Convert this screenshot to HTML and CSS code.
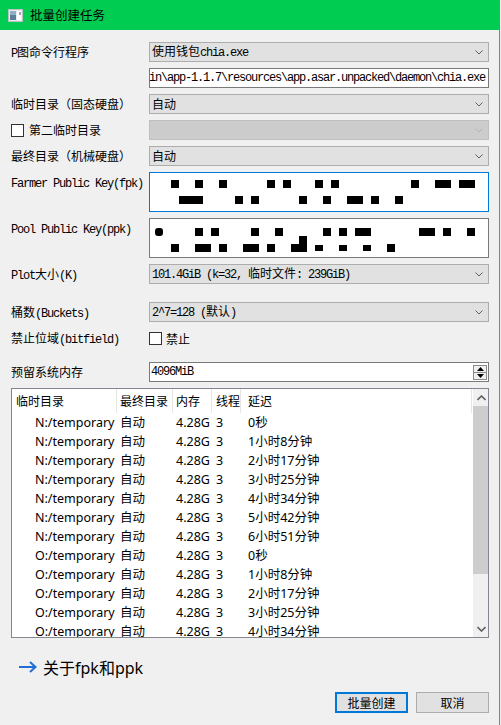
FILE: index.html
```html
<!DOCTYPE html>
<html lang="zh-CN">
<head>
<meta charset="utf-8">
<title>批量创建任务</title>
<link rel="stylesheet" href="styles.css">
</head>
<body>
<div class="window">
  <div class="titlebar">
    <svg class="app-icon" width="15" height="13" viewBox="0 0 15 13">
      <rect x="0.5" y="0.5" width="14" height="12" fill="#e8ecef" stroke="#b9c0c6"/>
      <rect x="2" y="2" width="6" height="9" fill="#5d7f96"/>
      <rect x="2" y="2" width="6" height="4" fill="#8fb0c4"/>
      <rect x="9" y="2" width="4" height="9" fill="#ffffff"/>
      <rect x="11" y="3" width="2" height="3" fill="#9aa5ad"/>
    </svg>
    <span class="title">批量创建任务</span>
  </div>

  <div class="content">
    <div class="form">
      <div class="row">
        <div class="label"><span class="m">P</span>图命令行程序</div>
        <div class="combo"><span class="val">使用钱包<span class="m">chia.exe</span></span><svg class="chev" width="8" height="5" viewBox="0 0 8 5"><path d="M0.5 0.5 L4 4 L7.5 0.5" fill="none" stroke="#606060" stroke-width="1"/></svg></div>
      </div>
      <div class="row">
        <div class="label"></div>
        <div class="input path"><span class="m">C:\Users\Administrator\AppData\Local\chia-blockchain\app-1.1.7\resources\app.asar.unpacked\daemon\chia.exe</span></div>
      </div>
      <div class="row">
        <div class="label">临时目录（固态硬盘）</div>
        <div class="combo"><span class="val">自动</span><svg class="chev" width="8" height="5" viewBox="0 0 8 5"><path d="M0.5 0.5 L4 4 L7.5 0.5" fill="none" stroke="#606060" stroke-width="1"/></svg></div>
      </div>
      <div class="row">
        <div class="label check-label"><span class="checkbox"></span>第二临时目录</div>
        <div class="combo disabled"><span class="val"></span><svg class="chev" width="8" height="5" viewBox="0 0 8 5"><path d="M0.5 0.5 L4 4 L7.5 0.5" fill="none" stroke="#b4b4b4" stroke-width="1"/></svg></div>
      </div>
      <div class="row">
        <div class="label">最终目录（机械硬盘）</div>
        <div class="combo"><span class="val">自动</span><svg class="chev" width="8" height="5" viewBox="0 0 8 5"><path d="M0.5 0.5 L4 4 L7.5 0.5" fill="none" stroke="#606060" stroke-width="1"/></svg></div>
      </div>
      <div class="row tall">
        <div class="label"><span class="m">Farmer Public Key(fpk)</span></div>
        <div class="keybox focused">
          <span class="redact" style="left:21px;top:7px;width:8px"></span>
          <span class="redact" style="left:45px;top:7px;width:8px"></span>
          <span class="redact" style="left:69px;top:7px;width:8px"></span>
          <span class="redact" style="left:117px;top:7px;width:8px"></span>
          <span class="redact" style="left:133px;top:7px;width:8px"></span>
          <span class="redact" style="left:165px;top:7px;width:8px"></span>
          <span class="redact" style="left:181px;top:7px;width:8px"></span>
          <span class="redact" style="left:261px;top:7px;width:8px"></span>
          <span class="redact" style="left:285px;top:7px;width:16px"></span>
          <span class="redact" style="left:309px;top:7px;width:16px"></span>
          <span class="redact" style="left:29px;top:23px;width:24px"></span>
          <span class="redact" style="left:85px;top:23px;width:8px"></span>
          <span class="redact" style="left:101px;top:23px;width:8px"></span>
          <span class="redact" style="left:149px;top:23px;width:8px"></span>
          <span class="redact" style="left:173px;top:23px;width:8px"></span>
          <span class="redact" style="left:197px;top:23px;width:16px"></span>
          <span class="redact" style="left:221px;top:23px;width:8px"></span>
          <span class="redact" style="left:245px;top:23px;width:8px"></span>
        </div>
      </div>
      <div class="row tall">
        <div class="label"><span class="m">Pool Public Key(ppk)</span></div>
        <div class="keybox">
          <span class="redact round" style="left:5px;top:9px;width:8px"></span>
          <span class="redact" style="left:45px;top:9px;width:8px"></span>
          <span class="redact" style="left:61px;top:9px;width:8px"></span>
          <span class="redact" style="left:101px;top:9px;width:8px"></span>
          <span class="redact" style="left:125px;top:9px;width:8px"></span>
          <span class="redact" style="left:173px;top:9px;width:8px"></span>
          <span class="redact" style="left:189px;top:9px;width:8px"></span>
          <span class="redact" style="left:205px;top:9px;width:16px"></span>
          <span class="redact" style="left:269px;top:9px;width:16px"></span>
          <span class="redact" style="left:293px;top:9px;width:8px"></span>
          <span class="redact" style="left:317px;top:9px;width:8px"></span>
          <span class="redact" style="left:21px;top:25px;width:8px"></span>
          <span class="redact" style="left:45px;top:25px;width:16px"></span>
          <span class="redact" style="left:69px;top:25px;width:8px"></span>
          <span class="redact" style="left:93px;top:25px;width:16px"></span>
          <span class="redact" style="left:117px;top:25px;width:8px"></span>
          <span class="redact" style="left:141px;top:25px;width:16px"></span>
          <span class="redact" style="left:149px;top:17px;width:8px"></span>
          <span class="redact thin" style="left:165px;top:26px;width:8px"></span>
          <span class="redact thin" style="left:189px;top:26px;width:8px"></span>
          <span class="redact thin" style="left:213px;top:26px;width:8px"></span>
          <span class="redact" style="left:237px;top:25px;width:8px"></span>
        </div>
      </div>
      <div class="row">
        <div class="label"><span class="m">Plot</span>大小<span class="m">(K)</span></div>
        <div class="combo"><span class="val"><span class="m">101.4GiB (k=32, </span>临时文件<span class="m">: 239GiB)</span></span><svg class="chev" width="8" height="5" viewBox="0 0 8 5"><path d="M0.5 0.5 L4 4 L7.5 0.5" fill="none" stroke="#606060" stroke-width="1"/></svg></div>
      </div>
      <div class="row gap-buckets">
        <div class="label">桶数<span class="m">(Buckets)</span></div>
        <div class="combo"><span class="val"><span class="m">2^7=128 (</span>默认<span class="m">)</span></span><svg class="chev" width="8" height="5" viewBox="0 0 8 5"><path d="M0.5 0.5 L4 4 L7.5 0.5" fill="none" stroke="#606060" stroke-width="1"/></svg></div>
      </div>
      <div class="row">
        <div class="label">禁止位域<span class="m">(bitfield)</span></div>
        <div class="field-check"><span class="checkbox"></span>禁止</div>
      </div>
      <div class="row gap-memory">
        <div class="label">预留系统内存</div>
        <div class="spin"><span class="m">4096MiB</span>
          <div class="spin-btns">
            <span class="spin-btn"><svg width="7" height="4" viewBox="0 0 7 4"><path d="M0 4 L3.5 0 L7 4 Z" fill="#000"/></svg></span>
            <span class="spin-btn"><svg width="7" height="4" viewBox="0 0 7 4"><path d="M0 0 L3.5 4 L7 0 Z" fill="#000"/></svg></span>
          </div>
        </div>
      </div>
    </div>

    <div class="table">
      <div class="list">
        <div class="thead">
          <div class="cell">临时目录</div>
          <div class="cell">最终目录</div>
          <div class="cell">内存</div>
          <div class="cell">线程</div>
          <div class="cell">延迟</div>
        </div>
        <div class="tbody">
          <div class="tr"><div class="cell">N:/temporary</div><div class="cell">自动</div><div class="cell">4.28G</div><div class="cell">3</div><div class="cell">0秒</div></div>
          <div class="tr"><div class="cell">N:/temporary</div><div class="cell">自动</div><div class="cell">4.28G</div><div class="cell">3</div><div class="cell">1小时8分钟</div></div>
          <div class="tr"><div class="cell">N:/temporary</div><div class="cell">自动</div><div class="cell">4.28G</div><div class="cell">3</div><div class="cell">2小时17分钟</div></div>
          <div class="tr"><div class="cell">N:/temporary</div><div class="cell">自动</div><div class="cell">4.28G</div><div class="cell">3</div><div class="cell">3小时25分钟</div></div>
          <div class="tr"><div class="cell">N:/temporary</div><div class="cell">自动</div><div class="cell">4.28G</div><div class="cell">3</div><div class="cell">4小时34分钟</div></div>
          <div class="tr"><div class="cell">N:/temporary</div><div class="cell">自动</div><div class="cell">4.28G</div><div class="cell">3</div><div class="cell">5小时42分钟</div></div>
          <div class="tr"><div class="cell">N:/temporary</div><div class="cell">自动</div><div class="cell">4.28G</div><div class="cell">3</div><div class="cell">6小时51分钟</div></div>
          <div class="tr"><div class="cell">O:/temporary</div><div class="cell">自动</div><div class="cell">4.28G</div><div class="cell">3</div><div class="cell">0秒</div></div>
          <div class="tr"><div class="cell">O:/temporary</div><div class="cell">自动</div><div class="cell">4.28G</div><div class="cell">3</div><div class="cell">1小时8分钟</div></div>
          <div class="tr"><div class="cell">O:/temporary</div><div class="cell">自动</div><div class="cell">4.28G</div><div class="cell">3</div><div class="cell">2小时17分钟</div></div>
          <div class="tr"><div class="cell">O:/temporary</div><div class="cell">自动</div><div class="cell">4.28G</div><div class="cell">3</div><div class="cell">3小时25分钟</div></div>
          <div class="tr"><div class="cell">O:/temporary</div><div class="cell">自动</div><div class="cell">4.28G</div><div class="cell">3</div><div class="cell">4小时34分钟</div></div>
        </div>
      </div>
      <div class="scrollbar">
        <div class="sb-arrow"><svg width="9" height="6" viewBox="0 0 9 6"><path d="M0.5 5 L4.5 1 L8.5 5" fill="none" stroke="#606060" stroke-width="1.6"/></svg></div>
        <div class="sb-track"><div class="sb-thumb"></div></div>
        <div class="sb-arrow"><svg width="9" height="6" viewBox="0 0 9 6"><path d="M0.5 1 L4.5 5 L8.5 1" fill="none" stroke="#606060" stroke-width="1.6"/></svg></div>
      </div>
    </div>

    <div class="link">
      <svg class="arrow" width="18" height="12" viewBox="0 0 18 12"><path d="M0 6 H16 M11 1 L16.5 6 L11 11" fill="none" stroke="#1f6fd6" stroke-width="2"/></svg>
      <span>关于fpk和ppk</span>
    </div>

    <div class="buttons">
      <div class="btn default">批量创建</div>
      <div class="btn">取消</div>
    </div>
  </div>
</div>
</body>
</html>
```

FILE: styles.css
```css
html, body {
  margin: 0;
  padding: 0;
  background: #f0f0f0;
}
body {
  width: 501px;
  height: 725px;
  overflow: hidden;
  font-family: "Noto Sans CJK SC", sans-serif;
  font-size: 12px;
  color: #000;
}
.window {
  width: 500px;
  height: 725px;
  box-sizing: border-box;
  border-right: 1px solid #00cc52;
  background: #f0f0f0;
}
.titlebar {
  height: 30px;
  background: #00cc52;
  display: flex;
  align-items: center;
  padding-left: 8px;
  gap: 7px;
}
.app-icon { display: block; margin-top: 1px; }
.title {
  font-size: 12.5px;
  line-height: 30px;
  color: #000;
}
.content {
  padding: 12px 10px 0 11px;
}
.m {
  font-family: "Liberation Mono", monospace;
  font-size: 12px;
  letter-spacing: -1.2px;
}
.form {
  display: flex;
  flex-direction: column;
  gap: 6px;
}
.row {
  display: flex;
  height: 20px;
}
.row.tall { height: 40px; }
.row.gap-buckets { margin-top: 12px; }
.row.gap-memory { margin-top: 8px; }
.label {
  width: 138px;
  line-height: 20px;
  white-space: nowrap;
  flex: none;
}
.check-label, .field-check {
  display: flex;
  align-items: center;
  gap: 5px;
}
.checkbox {
  width: 13px;
  height: 13px;
  box-sizing: border-box;
  border: 1px solid #333;
  background: #fff;
  flex: none;
}
.field-check { gap: 4px; }
.combo {
  width: 340px;
  height: 20px;
  box-sizing: border-box;
  border: 1px solid #adadad;
  background: #e1e1e1;
  display: flex;
  align-items: center;
  padding-left: 2px;
  padding-right: 5px;
  white-space: nowrap;
}
.combo .val { flex: 1; line-height: 18px; }
.combo.disabled {
  background: #cccccc;
  border-color: #bfbfbf;
}
.chev { display: block; }
.input {
  width: 340px;
  height: 20px;
  box-sizing: border-box;
  border: 1px solid #7a7a7a;
  background: #fff;
  display: flex;
  justify-content: flex-end;
  align-items: center;
  overflow: hidden;
  white-space: nowrap;
  padding-right: 3px;
}
.keybox {
  position: relative;
  width: 340px;
  height: 40px;
  box-sizing: border-box;
  border: 1px solid #7a7a7a;
  background: #fff;
}
.keybox.focused { border-color: #0078d7; }
.redact {
  position: absolute;
  height: 8px;
  background: #000;
}
.redact.round { border-radius: 3px; }
.redact.thin { height: 6px; }
.spin {
  width: 340px;
  height: 20px;
  box-sizing: border-box;
  border: 1px solid #7a7a7a;
  background: #fff;
  display: flex;
  align-items: center;
  padding-left: 1px;
  padding-right: 1px;
}
.spin .m { flex: 1; }
.spin-btns {
  display: flex;
  flex-direction: column;
  width: 14px;
  height: 15px;
  border: 1px solid #8a8a8a;
  box-sizing: border-box;
}
.spin-btn {
  flex: 1;
  display: flex;
  align-items: center;
  justify-content: center;
  background: #f0f0f0;
}
.spin-btn + .spin-btn { border-top: 1px solid #8a8a8a; }
.spin-btn svg { display: block; }

.table {
  margin-top: 6px;
  width: 478px;
  height: 250px;
  box-sizing: border-box;
  border: 1px solid #828790;
  background: #fff;
  display: flex;
  overflow: hidden;
}
.list {
  width: 460px;
  flex: none;
  font-family: "Noto Sans", "Noto Sans CJK SC", sans-serif;
  font-size: 12.5px;
  overflow: hidden;
}
.thead, .tr {
  display: grid;
  grid-template-columns: 105px 56px 39px 29px 231px;
}
.thead { height: 24px; }
.thead .cell {
  line-height: 24px;
  border-right: 1px solid #e5e5e5;
  font-family: "Noto Sans CJK SC", sans-serif;
  font-size: 12px;
}
.tr { height: 19px; }
.tr .cell { line-height: 19px; }
.cell { white-space: nowrap; overflow: hidden; }
.thead .cell:nth-child(1) { padding-left: 4px; }
.thead .cell:nth-child(2) { padding-left: 3px; }
.thead .cell:nth-child(3) { padding-left: 3px; }
.thead .cell:nth-child(4) { padding-left: 4px; }
.thead .cell:nth-child(5) { padding-left: 7px; }
.tr .cell:nth-child(1) { padding-left: 23px; }
.tr .cell:nth-child(2) { padding-left: 3px; }
.tr .cell:nth-child(3) { padding-left: 3px; }
.tr .cell:nth-child(4) { padding-left: 4px; }
.tr .cell:nth-child(5) { padding-left: 7px; }
.scrollbar {
  width: 16px;
  margin-left: 1px;
  flex: none;
  background: #f0f0f0;
  display: flex;
  flex-direction: column;
}
.sb-arrow {
  height: 17px;
  display: flex;
  align-items: center;
  justify-content: center;
  flex: none;
}
.sb-arrow svg { display: block; }
.sb-track { flex: 1; }
.sb-thumb {
  height: 168px;
  background: #cdcdcd;
}
.link {
  margin-top: 19px;
  height: 20px;
  display: flex;
  align-items: center;
  gap: 6px;
  padding-left: 8px;
  font-family: "Noto Sans", "Noto Sans CJK SC", sans-serif;
  font-size: 16px;
}
.arrow { display: block; }
.buttons {
  margin-top: 15px;
  display: flex;
  justify-content: flex-end;
  gap: 8px;
}
.btn {
  width: 73px;
  height: 21px;
  box-sizing: border-box;
  border: 1px solid #adadad;
  background: #e1e1e1;
  text-align: center;
  line-height: 19px;
  font-size: 12px;
}
.btn.default {
  border: 2px solid #0078d7;
  line-height: 17px;
}
```
